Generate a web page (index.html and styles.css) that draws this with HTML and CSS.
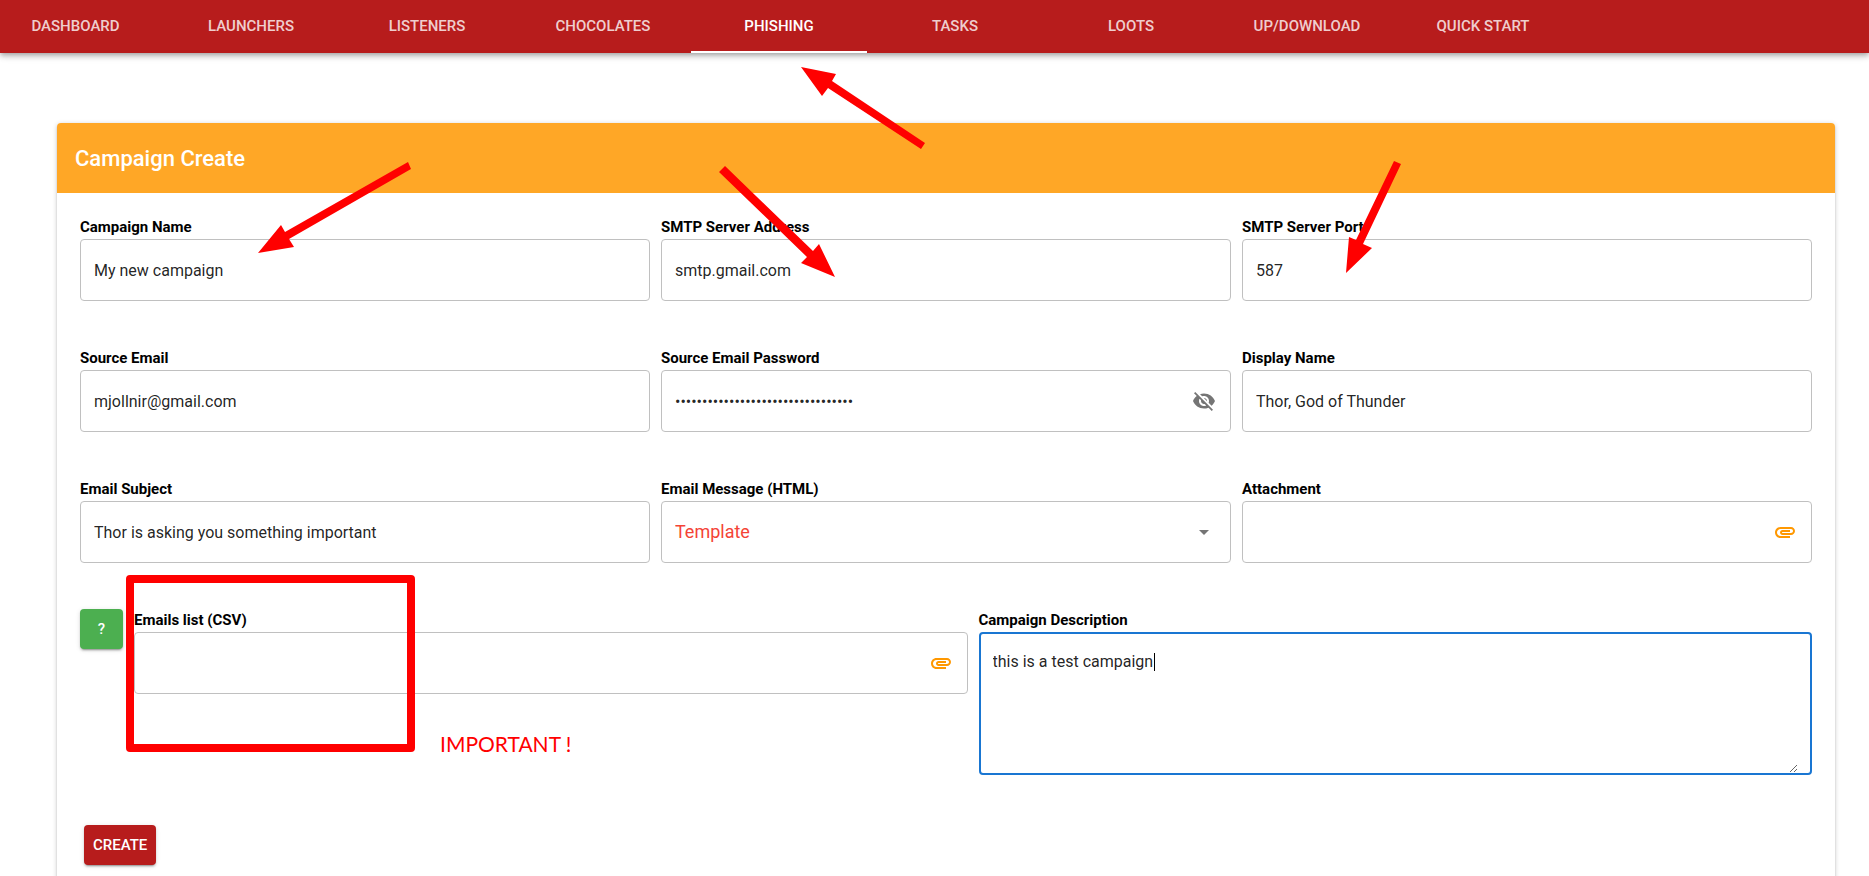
FILE: index.html
```html
<!DOCTYPE html>
<html lang="en">
<head>
<meta charset="utf-8">
<title>Campaign Create</title>
<link rel="stylesheet" href="styles.css">
</head>
<body>
<nav class="navbar">
  <a class="tab tab-first" href="#">DASHBOARD</a>
  <a class="tab" href="#">LAUNCHERS</a>
  <a class="tab" href="#">LISTENERS</a>
  <a class="tab" href="#">CHOCOLATES</a>
  <a class="tab tab-active" href="#">PHISHING</a>
  <a class="tab" href="#">TASKS</a>
  <a class="tab" href="#">LOOTS</a>
  <a class="tab" href="#">UP/DOWNLOAD</a>
  <a class="tab" href="#">QUICK START</a>
</nav>

<main class="card">
  <h1 class="card-title">Campaign Create</h1>
  <form class="form">
    <div class="row">
      <div class="field">
        <label class="label" for="name">Campaign Name</label>
        <div class="box"><input class="input" id="name" type="text" value="My new campaign"></div>
      </div>
      <div class="field">
        <label class="label" for="smtp">SMTP Server Address</label>
        <div class="box"><input class="input" id="smtp" type="text" value="smtp.gmail.com"></div>
      </div>
      <div class="field">
        <label class="label" for="port">SMTP Server Port</label>
        <div class="box"><input class="input" id="port" type="text" value="587"></div>
      </div>
    </div>

    <div class="row">
      <div class="field">
        <label class="label" for="email">Source Email</label>
        <div class="box"><input class="input" id="email" type="text" value="mjollnir@gmail.com"></div>
      </div>
      <div class="field">
        <label class="label" for="password">Source Email Password</label>
        <div class="box">
          <input class="input" id="password" type="password" value="abcdefghijklmnopqrstuvwxyz0123456">
          <button class="icon-button" type="button" aria-label="Show password">
            <svg class="icon" viewBox="0 0 24 24"><path d="M12 7c2.76 0 5 2.24 5 5 0 .65-.13 1.26-.36 1.83l2.92 2.92c1.51-1.26 2.7-2.89 3.43-4.75-1.73-4.39-6-7.5-11-7.5-1.4 0-2.74.25-3.98.7l2.16 2.16C10.74 7.13 11.35 7 12 7zM2 4.27l2.28 2.28.46.46C3.08 8.3 1.78 10.02 1 12c1.73 4.39 6 7.5 11 7.5 1.55 0 3.03-.3 4.38-.84l.42.42L19.73 22 21 20.73 3.27 3 2 4.27zM7.53 9.8l1.55 1.55c-.05.21-.08.43-.08.65 0 1.66 1.34 3 3 3 .22 0 .44-.03.65-.08l1.55 1.55c-.67.33-1.41.53-2.2.53-2.76 0-5-2.24-5-5 0-.79.2-1.53.53-2.2zm4.31-.78l3.15 3.15.02-.16c0-1.66-1.34-3-3-3l-.17.01z"/></svg>
          </button>
        </div>
      </div>
      <div class="field">
        <label class="label" for="display">Display Name</label>
        <div class="box"><input class="input" id="display" type="text" value="Thor, God of Thunder"></div>
      </div>
    </div>

    <div class="row">
      <div class="field">
        <label class="label" for="subject">Email Subject</label>
        <div class="box"><input class="input" id="subject" type="text" value="Thor is asking you something important"></div>
      </div>
      <div class="field">
        <label class="label" for="message">Email Message (HTML)</label>
        <div class="box">
          <select class="input select" id="message"><option>Template</option></select>
          <svg class="icon" viewBox="0 0 24 24"><path d="M7 10l5 5 5-5z"/></svg>
        </div>
      </div>
      <div class="field">
        <label class="label" for="attachment">Attachment</label>
        <div class="box">
          <input class="input" id="attachment" type="text" readonly>
          <button class="icon-button clip" type="button" aria-label="Attach a file">
            <svg class="icon" viewBox="0 0 24 24"><path d="M2 12.5C2 9.46 4.46 7 7.5 7H18c2.21 0 4 1.79 4 4s-1.79 4-4 4H9.5C8.12 15 7 13.88 7 12.5S8.12 10 9.5 10H17v2H9.41c-.55 0-.55 1 0 1H18c1.1 0 2-.9 2-2s-.9-2-2-2H7.5C5.57 9 4 10.57 4 12.5S5.57 16 7.5 16H17v2H7.5C4.46 18 2 15.54 2 12.5z"/></svg>
          </button>
        </div>
      </div>
    </div>

    <div class="row">
      <button class="button help" type="button">?</button>
      <div class="field">
        <label class="label" for="list">Emails list (CSV)</label>
        <div class="box">
          <input class="input" id="list" type="text" readonly>
          <button class="icon-button clip" type="button" aria-label="Attach a list">
            <svg class="icon" viewBox="0 0 24 24"><path d="M2 12.5C2 9.46 4.46 7 7.5 7H18c2.21 0 4 1.79 4 4s-1.79 4-4 4H9.5C8.12 15 7 13.88 7 12.5S8.12 10 9.5 10H17v2H9.41c-.55 0-.55 1 0 1H18c1.1 0 2-.9 2-2s-.9-2-2-2H7.5C5.57 9 4 10.57 4 12.5S5.57 16 7.5 16H17v2H7.5C4.46 18 2 15.54 2 12.5z"/></svg>
          </button>
        </div>
      </div>
      <div class="field">
        <label class="label" for="description">Campaign Description</label>
        <div class="box box-focused">
          <textarea class="input textarea" id="description">this is a test campaign</textarea>
          <span class="caret"></span>
        </div>
      </div>
    </div>

    <button class="button create" type="submit">CREATE</button>
  </form>
</main>

<svg class="arrows" viewBox="0 0 1869 876" aria-hidden="true">
  <polygon points="801,67 836,74 832,81 925,143 921,149 828,88 822,96"/>
  <polygon points="835,277 819,244 813,251 725,166 719,172 807,257 801,263"/>
  <polygon points="1346,273 1349,237 1356,240 1394,161 1401,164 1363,244 1372,248"/>
  <polygon points="258,253 281,225 285,232 408,162 411,169 289,239 294,247"/>
</svg>
<div class="highlight"></div>
<div class="note">IMPORTANT !</div>
</body>
</html>
```
FILE: styles.css
```css
* {
  box-sizing: border-box;
}

html {
  scrollbar-width: none;
}

body {
  position: relative;
  margin: 0;
  background: #fff;
  color: rgba(0, 0, 0, 0.87);
  font-family: Roboto, "Liberation Sans", sans-serif;
  font-size: 15px;
}

.navbar {
  display: flex;
  height: 53px;
  background: #b71c1c;
  box-shadow: 0 2px 4px -1px rgba(0, 0, 0, 0.2), 0 4px 5px rgba(0, 0, 0, 0.14), 0 1px 10px rgba(0, 0, 0, 0.12);
}

.tab {
  display: flex;
  align-items: center;
  justify-content: center;
  width: 176px;
  border-bottom: 2px solid transparent;
  color: rgba(255, 255, 255, 0.8);
  font-weight: 500;
  text-decoration: none;
}

.tab-first {
  width: 163px;
  padding-right: 12px;
}

.tab-active {
  border-bottom-color: #fff;
  color: #fff;
}

.card {
  margin: 70px 34px 24px 57px;
  border-radius: 4px;
  background: #fff;
  box-shadow: 0 3px 1px -2px rgba(0, 0, 0, 0.2), 0 2px 2px rgba(0, 0, 0, 0.14), 0 1px 5px rgba(0, 0, 0, 0.2);
}

.card-title {
  margin: 0;
  padding: 20px 18px 18px;
  border-radius: 4px 4px 0 0;
  background: #ffa726;
  color: #fff;
  font-size: 22px;
  font-weight: 500;
  line-height: 32px;
}

.form {
  padding: 22px 23px 24px;
}

.row {
  display: flex;
  align-items: flex-start;
  gap: 11px;
  margin-bottom: 45px;
}

.field {
  flex: 1 1 0;
  min-width: 0;
}

.label {
  display: block;
  color: #000;
  font-weight: 700;
  line-height: 24px;
}

.box {
  position: relative;
  display: flex;
  align-items: center;
  height: 62px;
  padding: 0 14px 0 13px;
  border: 1px solid #c0c0c0;
  border-radius: 4px;
}

.box-focused {
  height: auto;
  padding: 16px 12px 0;
  border: 2px solid #1976d2;
}

.input {
  flex: 1;
  min-width: 0;
  height: 100%;
  padding: 0;
  border: 0;
  outline: 0;
  background: none;
  color: rgba(0, 0, 0, 0.87);
  font: inherit;
  font-size: 16px;
}

.select {
  appearance: none;
  padding-bottom: 2px;
  color: #f44336;
  font-size: 18px;
}

.textarea {
  height: 123px;
  line-height: 24px;
  resize: vertical;
}

.caret {
  position: absolute;
  top: 19px;
  left: 173px;
  width: 1px;
  height: 18px;
  background: #000;
}

.icon-button {
  display: flex;
  padding: 0;
  border: 0;
  background: none;
}

.icon {
  width: 24px;
  height: 24px;
  fill: #757575;
}

.clip .icon {
  fill: #ff9800;
}

.button {
  height: 40px;
  padding: 0 9px;
  border: 0;
  border-radius: 4px;
  color: #fff;
  font: inherit;
  font-weight: 500;
  box-shadow: 0 3px 1px -2px rgba(0, 0, 0, 0.2), 0 2px 2px rgba(0, 0, 0, 0.14), 0 1px 5px rgba(0, 0, 0, 0.12);
}

.help {
  width: 43px;
  margin-top: 1px;
  background: #4caf50;
}

.create {
  display: block;
  margin: 50px 4px 0;
  background: #b71c1c;
}

.arrows {
  position: absolute;
  top: 0;
  left: 0;
  width: 1869px;
  height: 876px;
  fill: #f00;
  pointer-events: none;
}

.highlight {
  position: absolute;
  top: 575px;
  left: 126px;
  width: 289px;
  height: 177px;
  border: 8px solid #f00;
  border-radius: 4px;
  pointer-events: none;
}

.note {
  position: absolute;
  top: 732px;
  left: 440px;
  color: #f00;
  font-family: Lato, sans-serif;
  font-size: 21px;
  line-height: 24px;
}
```
